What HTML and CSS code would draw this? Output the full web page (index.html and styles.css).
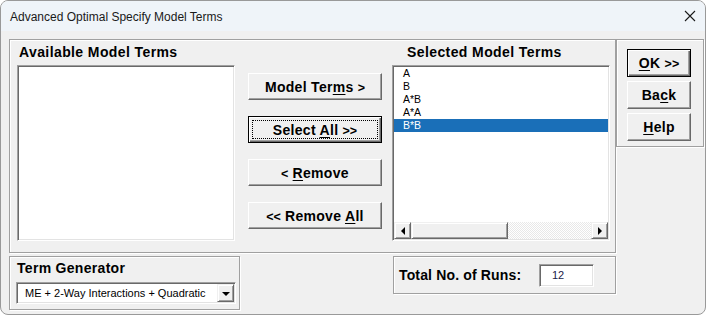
FILE: index.html
```html
<!DOCTYPE html>
<html>
<head>
<meta charset="utf-8">
<title>Advanced Optimal Specify Model Terms</title>
<link rel="stylesheet" href="styles.css">
</head>
<body>
<div class="window">
  <div class="titlebar">
    <span class="title">Advanced Optimal Specify Model Terms</span>
    <svg class="close" width="12" height="12" viewBox="0 0 12 12"><path d="M1 1L11 11M11 1L1 11" stroke="#1a1a1a" stroke-width="1.1" fill="none"/></svg>
  </div>
  <div class="client">
    <div class="top-row">
      <div class="frame main-frame">
        <div class="col col-left">
          <div class="label">Available Model Terms</div>
          <div class="listbox"></div>
        </div>
        <div class="col col-mid">
          <div class="btn wide"><span class="cap">Model Ter<u>m</u>s <span class="chev">&gt;</span></span></div>
          <div class="btn wide default"><span class="focus"><span class="cap">Select <u>A</u>ll <span class="chev">&gt;&gt;</span></span></span></div>
          <div class="btn wide"><span class="cap"><span class="chev">&lt;</span> <u>R</u>emove</span></div>
          <div class="btn wide"><span class="cap"><span class="chev">&lt;&lt;</span> Remove <u>A</u>ll</span></div>
        </div>
        <div class="col col-right">
          <div class="label label-sel">Selected Model Terms</div>
          <div class="listbox listbox-sel">
            <div class="items">
              <div class="item">A</div>
              <div class="item">B</div>
              <div class="item">A*B</div>
              <div class="item">A*A</div>
              <div class="item selected">B*B</div>
            </div>
            <div class="hscroll">
              <div class="sbtn"><span class="tri tri-left"></span></div>
              <div class="thumb"></div>
              <div class="track"></div>
              <div class="sbtn"><span class="tri tri-right"></span></div>
            </div>
          </div>
        </div>
      </div>
      <div class="frame side-frame">
        <div class="btn small default"><span class="cap"><u>O</u>K <span class="chev">&gt;&gt;</span></span></div>
        <div class="btn small"><span class="cap">Ba<u>c</u>k</span></div>
        <div class="btn small"><span class="cap"><u>H</u>elp</span></div>
      </div>
    </div>
    <div class="bottom-row">
      <div class="frame term-frame">
        <div class="label label-term">Term Generator</div>
        <div class="combo">
          <span class="combo-text">ME + 2-Way Interactions + Quadratic</span>
          <div class="sbtn combo-btn"><span class="tri tri-down"></span></div>
        </div>
      </div>
      <div class="frame runs-frame">
        <div class="label label-runs">Total No. of Runs:</div>
        <div class="input">12</div>
      </div>
    </div>
  </div>
</div>
</body>
</html>
```
FILE: styles.css
```css
* { box-sizing: border-box; }
html, body { margin: 0; padding: 0; background: #ffffff; }
body { width: 707px; height: 315px; overflow: hidden; }

.window {
  width: 706px;
  height: 315px;
  border: 1px solid #999999;
  border-radius: 8px;
  background: #f0f0f0;
  overflow: hidden;
  font-family: "Liberation Sans", Arial, sans-serif;
  color: #000;
}

.titlebar {
  height: 30px;
  background: #eff4f9;
  display: flex;
  align-items: center;
  justify-content: space-between;
  padding: 0 9px 0 9px;
}
.title {
  font-size: 12px;
  color: #1a1a1a;
  padding-top: 1px;
}

.client { padding: 8px 0 0 8px; }

.top-row { display: flex; align-items: flex-start; }
.bottom-row { display: flex; align-items: flex-start; margin-top: 3px; }

.frame {
  border: 1px solid #a0a0a0;
  box-shadow: inset 1px 1px 0 #ffffff, 1px 1px 0 #ffffff;
}

.main-frame {
  width: 607px;
  height: 214px;
  display: flex;
  padding: 4px 5px 0 7px;
}
.side-frame {
  width: 88px;
  height: 108px;
  display: flex;
  flex-direction: column;
  gap: 4px;
  padding: 9px 0 0 10px;
}

.col { display: flex; flex-direction: column; }
.col-left { width: 218px; }
.col-mid { width: 134px; margin-left: 13px; padding-top: 29px; gap: 16px; }
.col-right { width: 218px; margin-left: 10px; }

.label {
  font-size: 14px;
  font-weight: bold;
  line-height: 16px;
  height: 16px;
  letter-spacing: 0.4px;
  white-space: nowrap;
}
.col-left .label { padding-left: 2px; margin-bottom: 5px; }
.label-sel { padding-left: 15px; margin-bottom: 5px; }

.listbox {
  height: 176px;
  background: #fff;
  border: 1px solid;
  border-color: #a0a0a0 #ffffff #ffffff #a0a0a0;
  box-shadow: inset 1px 1px 0 #696969, inset -1px -1px 0 #e3e3e3;
  padding: 1px;
}
.listbox-sel { display: flex; flex-direction: column; }
.items { flex: 1; }
.item {
  height: 13px;
  line-height: 13px;
  font-size: 10.5px;
  padding-left: 9px;
  white-space: nowrap;
}
.item.selected { background: #1a6fb8; color: #fff; }

.hscroll { display: flex; height: 17px; }
.sbtn {
  width: 17px;
  height: 17px;
  background: #f0f0f0;
  border: 1px solid;
  border-color: #f0f0f0 #696969 #696969 #f0f0f0;
  box-shadow: inset 1px 1px 0 #ffffff, inset -1px -1px 0 #a0a0a0;
  display: flex;
  align-items: center;
  justify-content: center;
  flex: none;
}
.thumb {
  width: 97px;
  height: 17px;
  background: #f0f0f0;
  border: 1px solid;
  border-color: #f0f0f0 #696969 #696969 #f0f0f0;
  box-shadow: inset 1px 1px 0 #ffffff, inset -1px -1px 0 #a0a0a0;
  flex: none;
}
.track {
  flex: 1;
  background-color: #f4f4f4;
  background-image: repeating-conic-gradient(#ffffff 0 25%, #e8e8e8 0 50%);
  background-size: 2px 2px;
}
.tri { width: 0; height: 0; border-style: solid; display: block; }
.tri-left { border-width: 4px 4px 4px 0; border-color: transparent #000 transparent transparent; }
.tri-right { border-width: 4px 0 4px 4px; border-color: transparent transparent transparent #000; }
.tri-down { border-width: 4px 4px 0 4px; border-color: #000 transparent transparent transparent; margin-top: 1px; }

.btn {
  height: 27px;
  background: #f0f0f0;
  border: 1px solid;
  border-color: #ffffff #696969 #696969 #ffffff;
  box-shadow: inset -1px -1px 0 #a0a0a0;
  display: flex;
  align-items: center;
  justify-content: center;
  font-size: 14px;
  font-weight: bold;
  letter-spacing: 0.3px;
  white-space: nowrap;
}
.cap { white-space: pre; }
.chev { font-size: 12.5px; letter-spacing: 0; }
.btn u { text-underline-offset: 2px; }
.btn.small { width: 64px; height: 28px; }
.btn.default {
  border: 1px solid #000;
  box-shadow: inset 1px 1px 0 #ffffff, inset -1px -1px 0 #696969, inset -2px -2px 0 #a0a0a0;
  padding: 3px;
}
.focus {
  flex: 1;
  align-self: stretch;
  border: 1px dotted #000;
  display: flex;
  align-items: center;
  justify-content: center;
}

.term-frame {
  width: 231px;
  height: 54px;
  padding: 3px 3px 0 6px;
}
.label-term { padding-left: 1px; letter-spacing: 0.3px; margin-bottom: 6px; }
.combo {
  width: 220px;
  height: 22px;
  background: #fff;
  border: 1px solid;
  border-color: #a0a0a0 #ffffff #ffffff #a0a0a0;
  box-shadow: inset 1px 1px 0 #696969, inset -1px -1px 0 #e3e3e3;
  padding: 1px;
  display: flex;
  align-items: center;
}
.combo-text {
  flex: 1;
  font-size: 11px;
  padding-left: 7px;
  white-space: nowrap;
}
.combo-btn { height: 18px; }

.runs-frame {
  width: 223px;
  height: 38px;
  margin-left: 153px;
  display: flex;
  align-items: center;
  padding-left: 5px;
}
.label-runs { width: 140px; letter-spacing: 0.15px; }
.input {
  width: 55px;
  height: 23px;
  background: #fff;
  border: 1px solid;
  border-color: #a0a0a0 #ffffff #ffffff #a0a0a0;
  box-shadow: inset 1px 1px 0 #696969, inset -1px -1px 0 #e3e3e3;
  font-size: 11px;
  color: #1b1b48;
  padding: 4px 0 0 12px;
  line-height: 13px;
}
```
